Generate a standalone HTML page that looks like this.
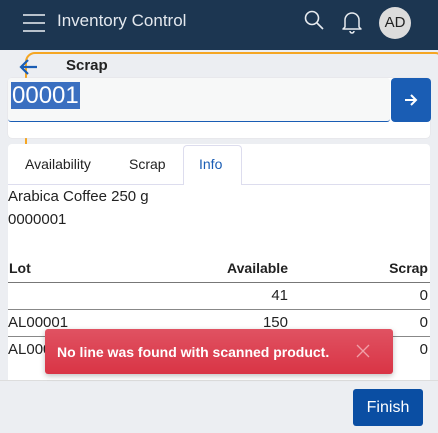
<!DOCTYPE html>
<html><head><style>
*{box-sizing:border-box;margin:0;padding:0}
html,body{width:438px;height:433px;overflow:hidden}
body{background:#eceef2;font-family:"Liberation Sans",sans-serif;position:relative;color:#222}
.hdr{position:absolute;left:0;top:0;width:438px;height:50px;background:#1c3651;color:#e8ecf0}
.abs{position:absolute}
</style></head><body>
<div class="hdr">
 <div class="abs" style="left:23px;top:14px;width:22px;height:2px;background:#b8c2cc;box-shadow:0 8px 0 #b8c2cc,0 16px 0 #b8c2cc"></div>
 <div class="abs" style="left:57px;top:11px;font-size:17px;color:#e3e8ee">Inventory Control</div>
 <svg class="abs" style="left:303px;top:9px" width="22" height="22" viewBox="0 0 22 22"><circle cx="9" cy="9" r="6.5" fill="none" stroke="#e8ecf0" stroke-width="1.6"/><line x1="14" y1="14" x2="20" y2="20" stroke="#e8ecf0" stroke-width="1.6"/></svg>
 <svg class="abs" style="left:341px;top:9px" width="22" height="26" viewBox="0 0 22 26"><path d="M4 18 V11 a7 7 0 0 1 14 0 V18 L20 20 H2 Z" fill="none" stroke="#e8ecf0" stroke-width="1.5" stroke-linejoin="round"/><path d="M9 22 a2 2 0 0 0 4 0" fill="none" stroke="#e8ecf0" stroke-width="1.5"/></svg>
 <div class="abs" style="left:379px;top:7px;width:32px;height:32px;border-radius:50%;background:#dcdcdc;color:#222;font-size:15px;text-align:center;line-height:32px">AD</div>
</div>
<div class="abs" style="left:25px;top:52px;width:420px;height:340px;border:2px solid #f5a623;border-radius:10px"></div>
<svg class="abs" style="left:19px;top:58px" width="20" height="18" viewBox="0 0 20 18"><path d="M18 9 H3 M9 2 L2 9 L9 16" fill="none" stroke="#1a5db4" stroke-width="2.2"/></svg>
<div class="abs" style="left:64px;top:57px;font-size:15px;font-weight:bold;color:#222;background:#eceef2;padding:0 2px">Scrap</div>
<div class="abs" style="left:8px;top:78px;width:422px;height:60px;background:#fff;border-radius:4px;box-shadow:0 0 1px #ccc"></div>
<div class="abs" style="left:8px;top:78px;width:382px;height:44px;background:#f7f8f8;border-bottom:1.5px solid #1a5db4;border-radius:3px"></div>
<div class="abs" style="left:11px;top:82px;height:27px;background:#3a6fc0;color:#fff;font-size:24px;line-height:27px;padding:0 1px">00001</div>
<div class="abs" style="left:391px;top:78px;width:40px;height:44px;background:#1a5db4;border-radius:4px"></div>
<svg class="abs" style="left:403px;top:92px" width="16" height="16" viewBox="0 0 16 16"><path d="M2 8 H13 M8 3 L13 8 L8 13" fill="none" stroke="#fff" stroke-width="2"/></svg>
<div class="abs" style="left:8px;top:144px;width:422px;height:240px;background:#fff;border-radius:4px"></div>
<div class="abs" style="left:8px;top:184px;width:422px;height:1px;background:#dde"></div>
<div class="abs" style="left:183px;top:145px;width:59px;height:40px;background:#fff;border:1px solid #dde;border-bottom:none;border-radius:4px 4px 0 0"></div>
<div class="abs" style="left:25px;top:156px;font-size:14px">Availability</div>
<div class="abs" style="left:129px;top:156px;font-size:14px">Scrap</div>
<div class="abs" style="left:199px;top:156px;font-size:14px;color:#1a5db4">Info</div>
<div class="abs" style="left:8px;top:188px;font-size:15px">Arabica Coffee 250 g</div>
<div class="abs" style="left:8px;top:211px;font-size:15px">0000001</div>
<div class="abs" style="left:9px;top:260px;font-size:14px;font-weight:bold">Lot</div>
<div class="abs" style="left:180px;top:260px;width:108px;text-align:right;font-size:14px;font-weight:bold">Available</div>
<div class="abs" style="left:330px;top:260px;width:98px;text-align:right;font-size:14px;font-weight:bold">Scrap</div>
<div class="abs" style="left:8px;top:282px;width:422px;height:1px;background:#777"></div>
<div class="abs" style="left:8px;top:309px;width:422px;height:1px;background:#888"></div>
<div class="abs" style="left:8px;top:336px;width:422px;height:1px;background:#888"></div>
<div class="abs" style="left:180px;top:287px;width:108px;text-align:right;font-size:15px">41</div>
<div class="abs" style="left:330px;top:287px;width:98px;text-align:right;font-size:15px">0</div>
<div class="abs" style="left:8px;top:314px;font-size:15px">AL00001</div>
<div class="abs" style="left:180px;top:314px;width:108px;text-align:right;font-size:15px">150</div>
<div class="abs" style="left:330px;top:314px;width:98px;text-align:right;font-size:15px">0</div>
<div class="abs" style="left:8px;top:341px;font-size:15px">AL00002</div>
<div class="abs" style="left:330px;top:341px;width:98px;text-align:right;font-size:15px">0</div>
<div class="abs" style="left:0;top:380px;width:438px;height:53px;background:#eceef2;border-top:1px solid #ddd"></div>
<div class="abs" style="left:45px;top:329px;width:348px;height:45px;background:linear-gradient(#e05262,#d93445);border-radius:3px;box-shadow:0 2px 6px rgba(0,0,0,.25)"></div>
<div class="abs" style="left:57px;top:344px;font-size:14px;font-weight:bold;color:#fff">No line was found with scanned product.</div>
<svg class="abs" style="left:356px;top:344px" width="14" height="14" viewBox="0 0 14 14"><path d="M1 1 L13 13 M13 1 L1 13" stroke="#f0a0a8" stroke-width="1.3"/></svg>
<div class="abs" style="left:353px;top:389px;width:70px;height:37px;background:#0a4ea3;border-radius:3px;color:#fff;font-size:16px;text-align:center;line-height:37px">Finish</div>
</body></html>
